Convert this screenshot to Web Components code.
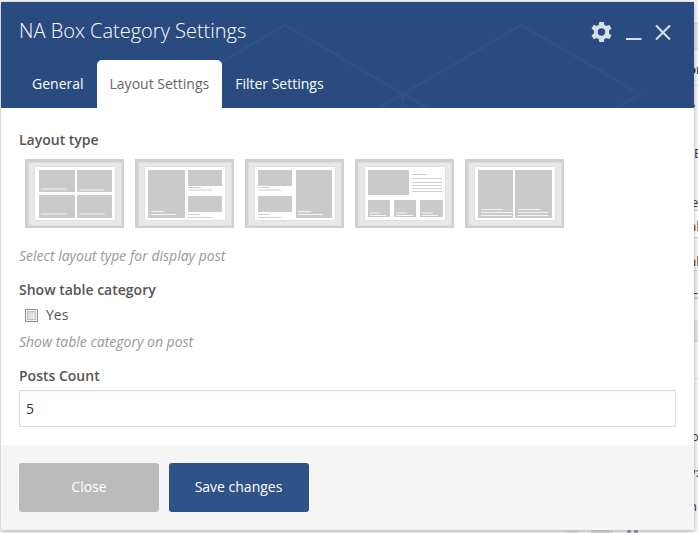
<!DOCTYPE html>
<html lang="en">
<head>
<meta charset="utf-8">
<title>NA Box Category Settings</title>
<style>
html,body{margin:0;height:100%;overflow:hidden;background:#f1f1f1;font:14px/20px "Open Sans","Noto Sans",sans-serif;color:#555}
body{position:relative;width:698px;height:533px}
</style>
</head>
<body>
<page-backdrop></page-backdrop>
<settings-dialog>
  <span slot="title">NA Box Category Settings</span>
  <tab-item slot="tabs">General</tab-item>
  <tab-item slot="tabs" active>Layout Settings</tab-item>
  <tab-item slot="tabs">Filter Settings</tab-item>
  <form-field label="Layout type" hint="Select layout type for display post" class="layout">
    <layout-picker></layout-picker>
  </form-field>
  <form-field label="Show table category" hint="Show table category on post" class="check">
    <check-option>Yes</check-option>
  </form-field>
  <form-field label="Posts Count"><text-box>5</text-box></form-field>
  <action-button slot="actions">Close</action-button>
  <action-button slot="actions" primary>Save changes</action-button>
</settings-dialog>
<script>
function define(name, html) {
  customElements.define(name, class extends HTMLElement {
    constructor() {
      super();
      const t = document.createElement('template');
      t.innerHTML = typeof html === 'function' ? html(this) : html;
      this.attachShadow({mode: 'open'}).appendChild(t.content.cloneNode(true));
    }
  });
}

define('page-backdrop', `<style>
:host{position:absolute;inset:0;overflow:hidden;background:#f5f5f5;font-size:13px;color:#32373c}
i{position:absolute;left:690px;width:10px;display:block}
span{position:absolute;line-height:18px}
svg{position:absolute;inset:0}
</style>
<i style="top:23px;height:25px;background:#e4e4e4;border:solid #d4d4d4;border-width:1px 0"></i>
<i style="top:85px;height:1px;background:#ddd"></i>
<i style="top:210px;height:26px;background:#fff;border:solid #ccc;border-width:1px 0"></i>
<i style="top:270px;height:26px;background:#eee;border:solid #ccc;border-width:1px 0 2px"></i>
<i style="top:320px;height:21px;background:#e4e4e4;border-bottom:1px solid #d4d4d4"></i>
<i style="top:378px;height:1px;background:#ddd"></i>
<i style="top:527px;left:563px;width:16px;height:8px;background:#e6e6e6"></i>
<i style="top:527px;left:591px;width:22px;height:8px;background:#ddd"></i>
<span style="left:688px;top:60px;font-weight:700">or</span>
<span style="left:688px;top:96px">e</span>
<span style="left:694px;top:144px">B</span>
<span style="left:691px;top:193px">e</span>
<span style="left:689px;top:217px">al</span>
<span style="left:689px;top:252px">al</span>
<span style="left:691px;top:280px">L</span>
<span style="left:691px;top:427px">o</span>
<span style="left:689px;top:463px">y:</span>
<span style="left:689px;top:497px">n</span>
<svg width="698" height="533" fill="none" stroke="#7c8590" stroke-width="1.400"><path d="M628 534v-3h2v3M635 534v-3h2v3"/></svg>`);

define('settings-dialog', `<style>
:host{position:absolute;left:1px;top:2px;width:693px;height:528px;display:flex;flex-direction:column;background:#fff;box-shadow:0 1px 4px rgba(0,0,0,.3);border-radius:0 0 2px 2px}
header{position:relative;height:106px;flex:none;background:#2a4b80;color:#fff;display:flex;flex-direction:column;justify-content:space-between}
.pattern{position:absolute;inset:0}
.bar{position:relative;display:flex;justify-content:space-between;align-items:flex-start;padding:14px 23px 0 18px}
h1{margin:0;font-size:20px;line-height:30px;font-weight:300}
nav{position:relative;display:flex;padding-left:18px}
main{flex:1;padding:22px 18px 0;display:flex;flex-direction:column;gap:14px}
footer{height:85px;box-sizing:border-box;padding:18px;display:flex;gap:10px;background:#f5f5f5}
</style>
<header>
<svg class="pattern" width="693" height="106" fill="none" stroke="#2f5187" stroke-width="3"><path d="M214 64L284 23 402 92 520 23 639 92 614 107M376 107L402 92 428 107M402 92v15"/></svg>
<div class="bar"><h1><slot name="title"></slot></h1><window-tools></window-tools></div>
<nav><slot name="tabs"></slot></nav>
</header>
<main><slot></slot></main>
<footer><slot name="actions"></slot></footer>`);

define('window-tools', `<style>:host{display:block;height:30px}svg{display:block}</style>
<svg width="84" height="30" viewBox="587 16 84 30">
<g transform="translate(601.500 32)" fill="#d9dfe9"><path fill-rule="evenodd" d="M-2.300-10h4.600l.6 3 1.900.9 2.900-1.200 2.300 3.900-2.400 2v2.800l2.400 2-2.300 3.900-2.900-1.200-1.900.9-.6 3h-4.600l-.6-3-1.900-.9-2.900 1.200-2.300-3.900 2.400-2v-2.800l-2.400-2 2.300-3.900 2.900 1.200 1.900-.9zM0-3.700a3.700 3.700 0 1 0 0 7.400 3.700 3.700 0 1 0 0-7.400z"/></g>
<path d="M626 39h15.500M656 25.500l14 14M670 25.500l-14 14" stroke="#d9dfe9" stroke-width="2.100" fill="none"/></svg>`);

define('tab-item', `<style>
:host{display:block;height:48px;box-sizing:border-box;padding:0 13px;line-height:48px;color:#fff;border-radius:5px 5px 0 0;white-space:nowrap}
:host([active]){background:#fff;color:#666}
</style><slot></slot>`);

define('form-field', el => `<style>
:host{display:block}
label{display:block;font-weight:600;color:#555}
p{margin:6px 0 0;font-style:italic;color:#999}
:host(.layout) p{margin-top:18px}
:host(.check) p{margin-top:7px}
</style><label>${el.getAttribute('label')}</label><slot></slot>${el.hasAttribute('hint') ? `<p>${el.getAttribute('hint')}</p>` : ''}`);

define('check-option', `<style>
:host{display:flex;align-items:center;gap:8px;padding-left:6px;height:20px;margin-top:5px}
i{width:13px;height:13px;box-sizing:border-box;border:1px solid #8e8f8f;background:linear-gradient(135deg,#c9cdd2,#f5f5f5);box-shadow:inset 0 0 0 1px #f4f4f4,inset 0 0 0 2px #bfc3c8}
</style><i></i><slot></slot>`);

define('text-box', `<style>
:host{display:block;box-sizing:border-box;width:657px;height:37px;margin-top:4px;padding:0 6px;line-height:36px;border:1px solid #ddd;color:#32373c;box-shadow:inset 0 1px 2px rgba(0,0,0,.05)}
</style><slot></slot>`);

define('action-button', `<style>
:host{display:block;width:140px;height:49px;line-height:48px;text-align:center;color:#fff;background:#bbb;border-radius:3px}
:host([primary]){background:#2f5288;text-indent:-1px}
</style><slot></slot>`);

define('layout-picker', `<style>
:host{display:flex;gap:11px;padding-left:6px;margin-top:9px}
layout-thumb{flex:none}
</style>${['grid', 'left', 'right', 'mixed', 'pair'].map(k => `<layout-thumb kind="${k}"></layout-thumb>`).join('')}`);

const art = {
  grid: ['M14 11h36v22H14zM52 11h35v22H52zM14 36h36v23H14zM52 36h35v23H52z', 'M16 30h26M54 31h25M16 55h26M54 55h26', ''],
  left: ['M13 11h37v48H13zM53 11h34v16H53zM53 37h34v16H53z', 'M16 52.500h13M16 55.500h25', 'M53 28.500h13M53 31h24M53 55.500h12M53 58.500h24'],
  right: ['M13 11h34v16H13zM13 37h34v16H13zM51 11h36v48H51z', 'M53 52.500h13M53 55.500h25', 'M13 28.500h12M13 31h23M13 55.500h12M13 58.500h23'],
  mixed: ['M13 11h41v25H13zM13 41h22v17H13zM39 41h22v17H39zM65 41h23v17H65z', 'M15 54h10M15 56.500h16M41 54h11M41 56.500h17M67 54h11M67 56.500h16', 'M57 15.500h15M57 19.500h30M57 23.500h30M57 26.500h30M57 29.500h30M57 32.500h30'],
  pair: ['M13 11h35v48H13zM50 11h37v48H50z', 'M16 50.500h22M16 53.500h31M16 56.500h31M53 50.500h22M53 53.500h30M53 56.500h30', '']
};
define('layout-thumb', el => {
  const [blocks, light, dark] = art[el.getAttribute('kind')];
  return `<style>:host,svg{display:block}</style>
<svg width="99" height="69" fill="none"><rect width="99" height="69" fill="#d0d0d0"/><rect x="3" y="3" width="94" height="64" fill="#dcdcdc"/><rect x="4" y="4" width="92" height="62" fill="#e8e8e8"/><path d="M9.500 7.500h81v54h-81z" fill="#fff" stroke="#e0e0e0"/>
<path d="${blocks}" fill="#cacaca"/><path d="${light}" stroke="#f2f2f2" stroke-width="1.200"/><path d="${dark}" stroke="#d0d0d0"/></svg>`;
});
</script>
</body>
</html>
